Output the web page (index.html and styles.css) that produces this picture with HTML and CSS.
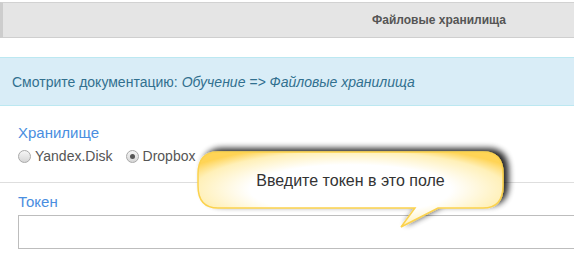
FILE: index.html
```html
<!DOCTYPE html>
<html>
<head>
<meta charset="utf-8">
<link rel="stylesheet" href="styles.css">
</head>
<body>
<div class="page">
  <div class="header"><span class="title">Файловые хранилища</span></div>
  <div class="info">Смотрите документацию: <i>Обучение =&gt; Файловые хранилища</i></div>
  <div class="field storage">
    <div class="label">Хранилище</div>
    <div class="radios">
      <label class="radio"><span class="dot"></span>Yandex.Disk</label>
      <label class="radio"><span class="dot on"></span>Dropbox</label>
    </div>
  </div>
  <div class="field token">
    <div class="label">Токен</div>
    <div class="input"></div>
  </div>
  <div class="callout">
    <svg class="bubble" width="340" height="100" viewBox="0 0 340 100">
      <defs>
        <radialGradient id="g" cx="50%" cy="50%" r="60%" fx="50%" fy="50%">
          <stop offset="0.55" stop-color="#ffffff"/>
          <stop offset="0.85" stop-color="#fff0b8"/>
          <stop offset="1" stop-color="#ffd457"/>
        </radialGradient>
        <filter id="sh" x="-20%" y="-40%" width="140%" height="180%">
          <feGaussianBlur in="SourceAlpha" stdDeviation="3"/>
          <feOffset dx="5" dy="-3" result="b"/>
          <feComponentTransfer><feFuncA type="linear" slope="0.85"/></feComponentTransfer>
          <feMerge><feMergeNode/><feMergeNode in="SourceGraphic"/></feMerge>
        </filter>
      </defs>
      <path filter="url(#sh)" fill="url(#g)" stroke="#fbd24e" stroke-width="1.5"
        d="M28 12 H293 Q313 12 313 34 V46 Q313 68 293 68 H248 L211 87 L225 68 H28 Q8 68 8 46 V34 Q8 12 28 12 Z"/>
    </svg>
    <span class="ctext">Введите токен в это поле</span>
  </div>
</div>
</body>
</html>
```
FILE: styles.css
```css
html, body { margin: 0; padding: 0; background: #fff; }
body { font-family: "Liberation Sans", Arial, sans-serif; }
.page { position: relative; width: 574px; height: 260px; overflow: hidden; }
.header {
  margin-top: 2px;
  height: 34px;
  background: #e5e5e5;
  border-top: 1px solid #d2d2d2;
  border-bottom: 1px solid #cfcfcf;
  border-left: 3px solid #cdcdcd;
  display: flex; align-items: center; justify-content: flex-end;
  padding-right: 68px;
}
.title { font-size: 12px; font-weight: bold; color: #555; }
.info {
  margin-top: 19px;
  height: 47px;
  background: #d9edf7;
  border-top: 1px solid #bce8f1;
  border-bottom: 1px solid #bce8f1;
  color: #31708f;
  font-size: 14px;
  display: flex; align-items: center;
  padding-left: 12px;
}
.info i { margin-left: 4px; }
.field { padding-left: 18px; }
.storage { padding-top: 18px; box-sizing: border-box; border-bottom: 1px solid #dedede; height: 77px; }
.label { color: #4a8ee0; font-size: 15px; line-height: 18px; }
.radios { display: flex; gap: 13px; margin-top: 6px; font-size: 14px; color: #555; }
.radio { display: flex; align-items: center; gap: 4px; }
.dot {
  width: 13px; height: 13px; border-radius: 50%;
  border: 1px solid #a9a9a9;
  background: linear-gradient(#f6f6f6, #d6d6d6);
  box-sizing: border-box; position: relative;
}
.dot.on::after {
  content: ""; position: absolute; left: 3px; top: 3px;
  width: 5px; height: 5px; border-radius: 50%; background: #555;
}
.token { padding-top: 10px; }
.token .label { margin-bottom: 4px; }
.input { height: 32px; border: 1px solid #bdbdbd; border-right: none; }
.callout { position: absolute; left: 190px; top: 140px; width: 340px; height: 100px; }
.bubble { position: absolute; left: 0; top: 0; }
.ctext { position: absolute; left: 0; width: 321px; top: 32px; text-align: center; font-size: 16px; color: #333; }
```
